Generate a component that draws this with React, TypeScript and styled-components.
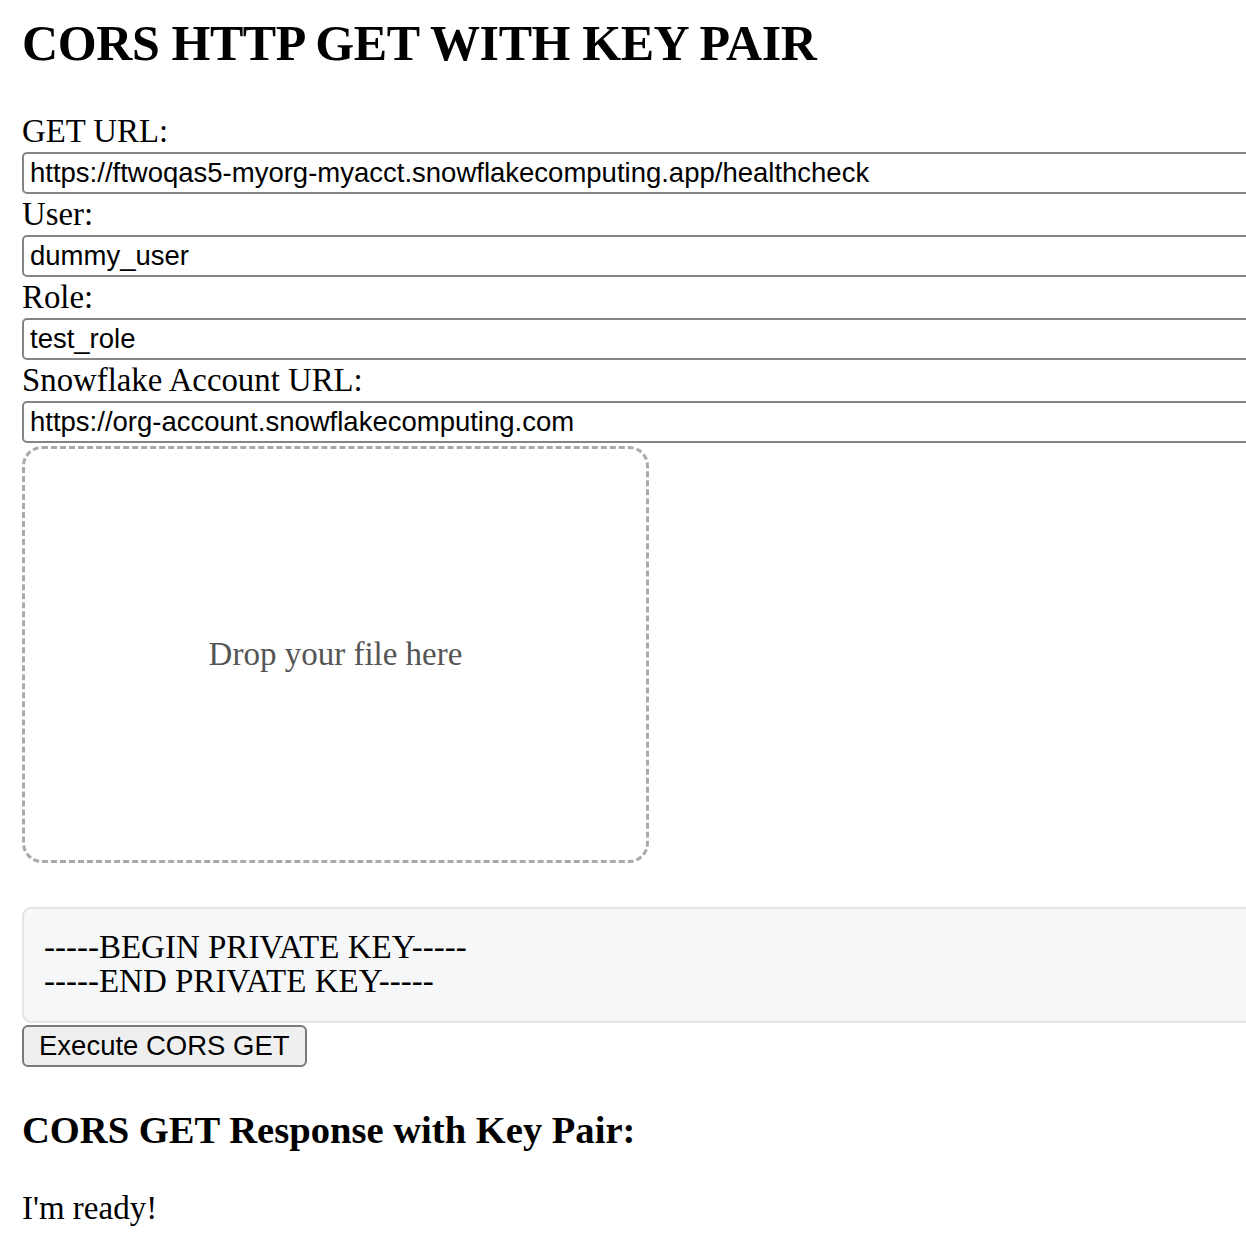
import * as React from 'react';
import styled, { createGlobalStyle } from 'styled-components';

const GlobalStyle = createGlobalStyle`
  html,
  body {
    margin: 0;
    padding: 0;
    overflow: hidden;
    background: #ffffff;
  }
  body {
    font-family: 'Liberation Serif', 'Times New Roman', serif;
    color: #000000;
  }
`;

const fields = [
  { label: 'GET URL:', value: 'https://ftwoqas5-myorg-myacct.snowflakecomputing.app/healthcheck' },
  { label: 'User:', value: 'dummy_user' },
  { label: 'Role:', value: 'test_role' },
  { label: 'Snowflake Account URL:', value: 'https://org-account.snowflakecomputing.com' },
];

const privateKey = '-----BEGIN PRIVATE KEY-----\n-----END PRIVATE KEY-----';

const App: React.FC = () => (
  <>
    <GlobalStyle />
    <Page>
      <Title>CORS HTTP GET WITH KEY PAIR</Title>
      <Form>
        {fields.map((f) => (
          <Field key={f.label}>
            <Label>{f.label}</Label>
            <TextInput type="text" defaultValue={f.value} />
          </Field>
        ))}
        <DropZone>
          <DropText>Drop your file here</DropText>
        </DropZone>
        <KeyArea readOnly spellCheck={false} value={privateKey} />
        <ExecuteButton type="button">Execute CORS GET</ExecuteButton>
      </Form>
      <SubTitle>CORS GET Response with Key Pair:</SubTitle>
      <Output>I'm ready!</Output>
    </Page>
  </>
);

export default App;

const Page = styled.div`
  padding: 0 0 0 22px;
  overflow: hidden;
`;

const Title = styled.h1`
  margin: 13px 0 38px;
  font-size: 50px;
  line-height: 60px;
  font-weight: 700;
  letter-spacing: -0.4px;
`;

const Form = styled.div`
  display: flex;
  flex-direction: column;
  align-items: flex-start;
`;

const Field = styled.div`
  display: flex;
  flex-direction: column;
`;

const Label = styled.label`
  display: block;
  font-size: 32.8px;
  line-height: 41px;
`;

const TextInput = styled.input`
  box-sizing: border-box;
  width: 1260px;
  height: 42px;
  margin: 0;
  padding: 0 6px;
  border: 2px solid #858585;
  border-radius: 5px;
  font-family: 'Liberation Sans', Arial, sans-serif;
  font-size: 27.5px;
  color: #000000;
  background: #ffffff;
  outline: none;
`;

const DropZone = styled.div`
  box-sizing: border-box;
  display: flex;
  align-items: center;
  justify-content: center;
  width: 627px;
  height: 417px;
  margin-top: 3px;
  border: 3px dashed #aaaaaa;
  border-radius: 20px;
`;

const DropText = styled.span`
  font-size: 33px;
  color: #555555;
`;

const KeyArea = styled.textarea`
  box-sizing: border-box;
  display: block;
  width: 1260px;
  height: 116px;
  margin: 44px 0 0;
  padding: 21px 20px 20px;
  border: 2px solid #e3e4e6;
  border-radius: 9px;
  background: #f6f7f9;
  font-family: 'Liberation Serif', 'Times New Roman', serif;
  font-size: 33px;
  line-height: 34px;
  color: #000000;
  resize: none;
  overflow: hidden;
  outline: none;
`;

const ExecuteButton = styled.button`
  box-sizing: border-box;
  height: 42px;
  margin-top: 2px;
  padding: 0 15px;
  border: 2px solid #7a7a7a;
  border-radius: 6px;
  background: #efefef;
  font-family: 'Liberation Sans', Arial, sans-serif;
  font-size: 27.5px;
  color: #000000;
`;

const SubTitle = styled.h3`
  margin: 41px 0 0;
  font-size: 38.6px;
  line-height: 44px;
  font-weight: 700;
`;

const Output = styled.p`
  margin: 38px 0 0;
  font-size: 33px;
  line-height: 37px;
`;
